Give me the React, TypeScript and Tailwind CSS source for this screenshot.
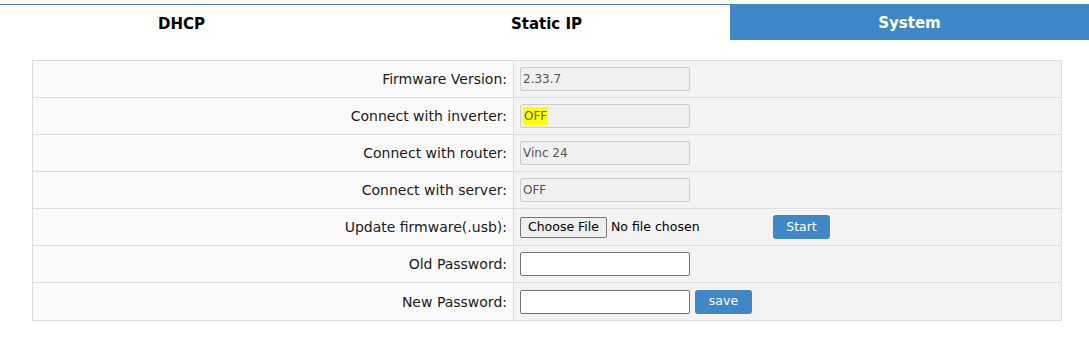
const rows: { label: string; value?: string; highlight?: boolean }[] = [
    { label: 'Firmware Version:', value: '2.33.7' },
    { label: 'Connect with inverter:', value: 'OFF', highlight: true },
    { label: 'Connect with router:', value: 'Vinc 24' },
    { label: 'Connect with server:', value: 'OFF' },
];

const font = { fontFamily: 'Tahoma, "DejaVu Sans", sans-serif' };

const App = () => {
    return (
        <div className="h-[340px] w-[1089px] bg-white pt-1 text-[#1a1a1a]" style={font}>
            {/* tabs */}
            <div className="flex h-9 border-t border-[#4a7fc0]">
                <div className="flex w-[363px] items-center justify-center pt-[3px] text-[15px] font-bold text-black">DHCP</div>
                <div className="flex w-[367px] items-center justify-center pt-[3px] text-[15px] font-bold text-black">Static IP</div>
                <div className="-mt-px flex flex-1 items-center justify-center bg-[#3f88c8] pt-[3px] text-[15px] font-bold text-white">
                    System
                </div>
            </div>

            <div className="mx-8 mt-5 w-[1030px] border border-[#ddd]">
                {rows.map((r) => (
                    <div key={r.label} className="flex h-[37px] border-b border-[#ddd]">
                        <div className="flex w-[481px] items-center justify-end border-r border-[#ddd] bg-[#fafafa] pt-px pr-[6px] text-[14px]">
                            {r.label}
                        </div>
                        <div className="flex flex-1 items-center bg-[#f3f3f3] pl-[6px]">
                            <div className="flex h-6 w-[170px] items-center rounded-[2px] border border-[#ccc] bg-[#f0f0f0] px-[2px] text-[12px] text-[#555]">
                                <span className={r.highlight ? 'bg-[#ffff00] px-px text-[#666600]' : ''}>{r.value}</span>
                            </div>
                        </div>
                    </div>
                ))}

                <div className="flex h-[37px] border-b border-[#ddd]">
                    <div className="flex w-[481px] items-center justify-end border-r border-[#ddd] bg-[#fafafa] pt-px pr-[6px] text-[14px]">
                        Update firmware(.usb):
                    </div>
                    <div className="flex flex-1 items-center bg-[#f3f3f3] pl-[6px] text-[12.5px]">
                        <span className="flex h-[21px] w-[87px] items-center justify-center rounded-[2px] border border-[#767676] bg-[#efefef] text-black">
                            Choose File
                        </span>
                        <span className="ml-1 w-[162px] text-black">No file chosen</span>
                        <button className="h-6 w-[57px] rounded-[3px] bg-[#3f88c8] text-[12.5px] text-white">Start</button>
                    </div>
                </div>

                <div className="flex h-[37px] border-b border-[#ddd]">
                    <div className="flex w-[481px] items-center justify-end border-r border-[#ddd] bg-[#fafafa] pt-px pr-[6px] text-[14px]">
                        Old Password:
                    </div>
                    <div className="flex flex-1 items-center bg-[#f3f3f3] pl-[6px]">
                        <div className="h-6 w-[170px] rounded-[2px] border border-[#767676] bg-white" />
                    </div>
                </div>

                <div className="flex h-[37px]">
                    <div className="flex w-[481px] items-center justify-end border-r border-[#ddd] bg-[#fafafa] pt-px pr-[6px] text-[14px]">
                        New Password:
                    </div>
                    <div className="flex flex-1 items-center bg-[#f3f3f3] pl-[6px]">
                        <div className="h-6 w-[170px] rounded-[2px] border border-[#767676] bg-white" />
                        <button className="ml-[5px] h-6 w-[57px] rounded-[3px] bg-[#3f88c8] text-[12.5px] text-white">save</button>
                    </div>
                </div>
            </div>
        </div>
    );
};

export default App;
